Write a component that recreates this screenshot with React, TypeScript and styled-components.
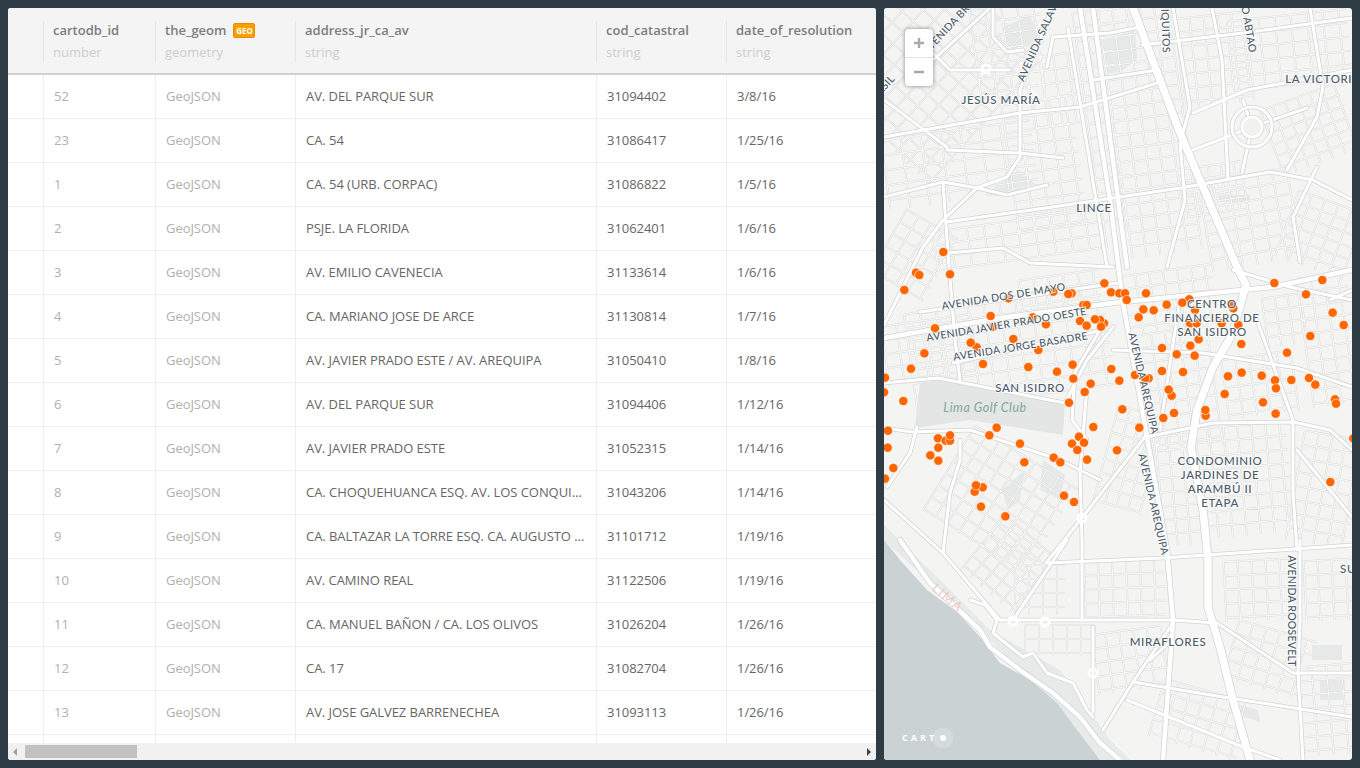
import React from "react";
import styled, { createGlobalStyle } from "styled-components";

const COLUMNS = [
  { name: "", type: "", width: 36 },
  { name: "cartodb_id", type: "number", width: 112 },
  { name: "the_geom", type: "geometry", width: 140, geo: true },
  { name: "address_jr_ca_av", type: "string", width: 301 },
  { name: "cod_catastral", type: "string", width: 130 },
  { name: "date_of_resolution", type: "string", width: 149 },
];

const ROWS = [
  ["52", "AV. DEL PARQUE SUR", "31094402", "3/8/16"],
  ["23", "CA. 54", "31086417", "1/25/16"],
  ["1", "CA. 54 (URB. CORPAC)", "31086822", "1/5/16"],
  ["2", "PSJE. LA FLORIDA", "31062401", "1/6/16"],
  ["3", "AV. EMILIO CAVENECIA", "31133614", "1/6/16"],
  ["4", "CA. MARIANO JOSE DE ARCE", "31130814", "1/7/16"],
  ["5", "AV. JAVIER PRADO ESTE / AV. AREQUIPA", "31050410", "1/8/16"],
  ["6", "AV. DEL PARQUE SUR", "31094406", "1/12/16"],
  ["7", "AV. JAVIER PRADO ESTE", "31052315", "1/14/16"],
  ["8", "CA. CHOQUEHUANCA ESQ. AV. LOS CONQUISTADORES", "31043206", "1/14/16"],
  ["9", "CA. BALTAZAR LA TORRE ESQ. CA. AUGUSTO TAMAYO", "31101712", "1/19/16"],
  ["10", "AV. CAMINO REAL", "31122506", "1/19/16"],
  ["11", "CA. MANUEL BAÑON / CA. LOS OLIVOS", "31026204", "1/26/16"],
  ["12", "CA. 17", "31082704", "1/26/16"],
  ["13", "AV. JOSE GALVEZ BARRENECHEA", "31093113", "1/26/16"],
];

type Pt = number[];

const MOTORWAY: Pt[][] = [
  [[1133, 8], [1180, 133], [1200, 180], [1237, 267], [1246, 285], [1232, 335], [1213, 367], [1197, 410], [1191, 447], [1203, 510], [1208, 560], [1208, 607], [1220, 647], [1233, 700], [1250, 760]],
];

const MAIN: Pt[][] = [
  [[884, 338], [1000, 318], [1113, 303], [1273, 287], [1352, 270]],
  [[1080, 8], [1110, 200], [1123, 303], [1147, 437], [1167, 550], [1173, 620], [1163, 760]],
  [[900, 540], [930, 583], [980, 630], [990, 647], [1020, 670], [1053, 693], [1080, 717], [1100, 743], [1120, 760]],
  [[1093, 8], [1127, 267]],
];

const ROADS: Pt[][] = [
  [[1052, 8], [1020, 90], [1020, 157], [1007, 177], [977, 188], [943, 220], [923, 247], [913, 267], [900, 293], [884, 325]],
  [[884, 137], [1020, 113], [1080, 107], [1157, 83]],
  [[1142, 45], [1243, 33], [1352, 18]],
  [[947, 222], [1080, 203], [1180, 188], [1270, 172], [1313, 180], [1352, 200]],
  [[1193, 113], [1247, 90], [1352, 70]],
  [[1193, 150], [1252, 127], [1307, 108]],
  [[1243, 100], [1252, 127], [1242, 173]],
  [[948, 253], [1003, 248], [1030, 263], [1113, 267]],
  [[884, 197], [943, 182], [977, 188], [1007, 195], [1047, 185]],
  [[947, 150], [1020, 153], [1063, 158]],
  [[943, 183], [948, 253], [955, 340], [960, 380]],
  [[1173, 8], [1190, 107], [1180, 143], [1185, 200], [1167, 267]],
  [[1310, 8], [1323, 87], [1317, 117], [1287, 170]],
  [[1317, 167], [1293, 217], [1300, 262]],
  [[884, 428], [913, 432], [970, 430], [1060, 460], [1100, 480]],
  [[884, 383], [938, 378], [1065, 403], [1087, 360], [1113, 327]],
  [[1113, 350], [1203, 353], [1297, 368], [1352, 387]],
  [[1147, 437], [1213, 423], [1293, 422], [1330, 430], [1352, 450]],
  [[1147, 434], [1082, 518], [1046, 563]],
  [[1087, 387], [1080, 473], [1082, 540], [1082, 620]],
  [[1047, 563], [1163, 558], [1352, 545]],
  [[1000, 620], [1173, 620], [1217, 623]],
  [[1217, 623], [1293, 673], [1352, 673]],
  [[1133, 682], [1223, 697], [1352, 717]],
  [[1127, 700], [1243, 747], [1280, 760]],
  [[1093, 627], [1093, 712]],
  [[1173, 623], [1133, 682], [1103, 730]],
  [[1300, 540], [1300, 620], [1298, 673], [1303, 760]],
  [[884, 500], [943, 553], [1000, 620]],
  [[970, 600], [985, 605], [997, 620], [993, 633], [1023, 657], [1033, 653], [1047, 673], [1073, 683], [1087, 710], [1093, 717]],
  [[917, 427], [910, 453], [887, 487]],
  [[960, 440], [960, 460], [950, 493], [943, 553]],
  [[1067, 540], [1013, 620]],
  [[1257, 320], [1293, 420], [1293, 493], [1297, 550]],
  [[1297, 450], [1352, 517]],
  [[920, 312], [1117, 283]],
  [[953, 363], [1103, 330]],
  [[1233, 270], [1290, 287], [1352, 300]],
  [[1100, 330], [1075, 372], [1072, 420], [1087, 440]],
  [[1068, 28], [1085, 133], [1107, 267]],
  [[1053, 37], [1047, 67]],
  [[1053, 37], [1110, 33], [1140, 27]],
  [[1093, 80], [1157, 70]],
  [[993, 8], [993, 37], [1007, 52], [1023, 50]],
  [[884, 100], [947, 147]],
  [[933, 60], [990, 8]],
  [[1010, 70], [950, 70], [925, 45]],
  [[1330, 300], [1352, 290]],
  [[1180, 300], [1172, 350], [1160, 430]],
  [[1212, 8], [1222, 60], [1228, 180]],
  [[1150, 660], [1172, 640]],
];

// rotated blocks of small streets: cx, cy, w, h, angle, dx, dy
const BLOCKS = [
  [930, 70, 150, 170, 42, 15, 15],
  [1010, 50, 70, 90, -8, 16, 14],
  [960, 165, 150, 70, -8, 20, 15],
  [1045, 165, 70, 130, -8, 16, 14],
  [1055, 90, 50, 70, -8, 14, 14],
  [1105, 120, 35, 220, -8, 12, 14],
  [1150, 130, 70, 250, -8, 14, 14],
  [1215, 60, 70, 90, -6, 14, 14],
  [1290, 50, 120, 70, -6, 16, 14],
  [1310, 130, 80, 70, -20, 13, 12],
  [1215, 190, 60, 50, -8, 13, 12],
  [1250, 220, 90, 90, -10, 15, 13],
  [1320, 235, 70, 70, 20, 14, 12],
  [1020, 240, 170, 40, -8, 17, 13],
  [915, 255, 60, 70, 30, 14, 14],
  [1010, 350, 200, 100, -8, 16, 14],
  [930, 350, 90, 60, -8, 15, 14],
  [1060, 290, 80, 30, -8, 15, 13],
  [1180, 390, 70, 120, -8, 14, 14],
  [1260, 385, 70, 60, -8, 14, 14],
  [1330, 340, 50, 130, -8, 14, 14],
  [1170, 300, 90, 60, -8, 14, 13],
  [1290, 320, 50, 50, -8, 13, 13],
  [1180, 490, 40, 110, -5, 13, 14],
  [1245, 480, 90, 110, -5, 14, 14],
  [1325, 490, 60, 110, 10, 14, 14],
  [1125, 590, 80, 60, -2, 14, 14],
  [1260, 590, 70, 60, -3, 14, 14],
  [1330, 590, 50, 60, -3, 14, 14],
  [1000, 500, 120, 100, 32, 14, 14],
  [1010, 565, 70, 70, 40, 13, 13],
  [1040, 590, 50, 50, 0, 14, 14],
  [1060, 640, 70, 30, 0, 14, 14],
  [1130, 660, 70, 60, -8, 14, 14],
  [1270, 660, 80, 60, 16, 14, 14],
  [1200, 720, 90, 60, 16, 14, 14],
  [1330, 710, 60, 90, -5, 15, 14],
  [1130, 460, 50, 100, 15, 12, 14],
];

const PARKS: Pt[][] = [
  [[1002, 28], [1030, 15], [1040, 40], [1010, 50]],
  [[1103, 40], [1135, 30], [1137, 60], [1120, 72], [1105, 74]],
  [[985, 195], [1018, 170], [1040, 188], [1000, 196]],
  [[1218, 195], [1250, 195], [1250, 202], [1220, 202]],
  [[1043, 460], [1065, 475], [1060, 500], [1040, 490]],
  [[1002, 490], [1025, 470], [1020, 500], [1008, 510]],
  [[1312, 645], [1342, 645], [1342, 660], [1312, 660]],
  [[1240, 705], [1258, 710], [1260, 722], [1242, 716]],
  [[1320, 680], [1345, 680], [1345, 700], [1320, 700]],
];

const PINS = [
  [190, -24], [108, 38], [118, 45], [210, 43], [73, 90], [673, 70], [693, 97], [718, 100], [735, 100], [740, 120],
  [798, 100], [575, 100], [565, 102], [520, 95], [385, 115], [610, 135], [620, 135], [332, 168], [458, 172], [600, 183],
  [498, 193], [672, 190], [660, 180], [645, 178], [620, 197], [663, 200], [165, 205], [340, 200], [290, 262], [272, 248],
  [400, 237], [475, 270], [133, 280], [93, 326], [309, 312], [445, 321], [531, 335], [578, 314], [580, 356], [632, 371],
  [614, 396], [567, 428], [15, 353], [12, 397], [70, 423], [694, 327], [718, 362], [806, 355], [796, 356], [765, 345],
  [846, 333], [909, 336], [846, 264], [890, 283], [931, 257], [944, 287], [956, 238], [1084, 252], [790, 148], [821, 151],
  [860, 134], [776, 172], [928, 118], [907, 128], [945, 150], [1060, 145], [1055, 135], [930, 190], [950, 190], [1025, 190],
  [1075, 195], [1183, 69], [1327, 60], [1278, 103], [1358, 158], [1391, 195], [1291, 228], [1221, 278], [1044, 349], [1085, 338],
  [1145, 347], [1185, 361], [1188, 385], [1234, 360], [1287, 354], [1306, 374], [1034, 402], [1149, 427], [1187, 461], [1365, 418],
  [1368, 431], [875, 407], [866, 389], [977, 467], [976, 450], [882, 459], [850, 474], [727, 448], [640, 501], [778, 503],
  [597, 530], [576, 551], [612, 548], [592, 570], [621, 599], [711, 571], [24, 512], [23, 563], [40, 624], [15, 656],
  [174, 535], [197, 542], [210, 542], [210, 526], [175, 563], [151, 586], [175, 602], [350, 503], [328, 526], [420, 551],
  [433, 607], [521, 593], [541, 607], [308, 682], [284, 695], [288, 676], [303, 740], [376, 769], [552, 707], [582, 726],
  [1351, 666], [1420, 535],
].map(([x, y]) => [880 + x / 3, 260 + y / 3]);

const LABELS = [
  { text: "AVENIDA BRASIL", x: 866, y: 111, angle: -47 },
  { text: "AVENIDA BRASIL", x: 956, y: 24, angle: -47 },
  { text: "AVENIDA SALAVERRY", x: 1046, y: 32, angle: -66 },
  { text: "IQUITOS", x: 1162, y: 31, angle: 88 },
  { text: "AV. ANTONIO ABTAO", x: 1240, y: 0, angle: 80 },
  { text: "JESÚS MARÍA", x: 1001, y: 104, size: 11.5 },
  { text: "LA VICTORIA", x: 1323, y: 83, size: 11.5 },
  { text: "LINCE", x: 1094, y: 212, size: 11.5 },
  { text: "AVENIDA DOS DE MAYO", x: 1004, y: 300, angle: -9 },
  { text: "AVENIDA JAVIER PRADO OESTE", x: 1007, y: 328, angle: -9.5 },
  { text: "AVENIDA JORGE BASADRE", x: 1021, y: 350, angle: -9 },
  { text: "CENTRO", x: 1212, y: 308, size: 11.5 },
  { text: "FINANCIERO DE", x: 1212, y: 322, size: 11.5 },
  { text: "SAN ISIDRO", x: 1212, y: 336, size: 11.5 },
  { text: "SAN ISIDRO", x: 1030, y: 392, size: 11.5 },
  { text: "AVENIDA AREQUIPA", x: 1140, y: 384, angle: 77 },
  { text: "AVENIDA AREQUIPA", x: 1150, y: 505, angle: 77 },
  { text: "CONDOMINIO", x: 1220, y: 465, size: 11.5 },
  { text: "JARDINES DE", x: 1220, y: 479, size: 11.5 },
  { text: "ARAMBÚ II", x: 1220, y: 493, size: 11.5 },
  { text: "ETAPA", x: 1220, y: 507, size: 11.5 },
  { text: "AVENIDA ROOSEVELT", x: 1288, y: 611, angle: 90 },
  { text: "SUR", x: 1352, y: 573, size: 11.5 },
  { text: "MIRAFLORES", x: 1168, y: 646, size: 11.5 },
];

const toPath = (line: Pt[]) => "M" + line.map((p) => p.join(" ")).join("L");

const blockPath = ([cx, cy, w, h, angle, dx, dy]: number[]) => {
  const a = (angle * Math.PI) / 180;
  const put = (x: number, y: number) =>
    `${(cx + x * Math.cos(a) - y * Math.sin(a)).toFixed(1)} ${(cy + x * Math.sin(a) + y * Math.cos(a)).toFixed(1)}`;
  let d = "";
  for (let x = -w / 2; x <= w / 2; x += dx) d += `M${put(x, -h / 2)}L${put(x, h / 2)}`;
  for (let y = -h / 2; y <= h / 2; y += dy) d += `M${put(-w / 2, y)}L${put(w / 2, y)}`;
  return d;
};

const CityMap = () => (
  <MapSvg viewBox="884 8 468 752">
    <rect x="884" y="8" width="468" height="752" fill="#f4f4f3" />
    {PARKS.map((p, i) => (
      <polygon key={i} points={p.join(" ")} fill="#e6e9e7" />
    ))}
    {BLOCKS.map((b, i) => (
      <SmallCasing key={i} d={blockPath(b)} />
    ))}
    {BLOCKS.map((b, i) => (
      <SmallStreet key={i} d={blockPath(b)} />
    ))}
    <polygon
      points="920,383 938,380 1065,403 1063,435 970,420 915,428"
      fill="#e3e6e5"
    />
    <polygon points="884,525 930,570 990,630 1060,670 1110,740 1130,760 1100,760 1040,690 960,610 900,555 884,540" fill="#e7eae8" />
    <polygon
      points="884,540 900,560 927,590 957,612 980,637 1000,663 1030,680 1057,703 1077,730 1100,760 884,760"
      fill="#cad2d3"
    />
    {ROADS.map((r, i) => <Casing key={i} d={toPath(r)} $w={4.5} />)}
    {MAIN.map((r, i) => <Casing key={i} d={toPath(r)} $w={6} />)}
    {MOTORWAY.map((r, i) => <Casing key={i} d={toPath(r)} $w={9} />)}
    {ROADS.map((r, i) => <Road key={i} d={toPath(r)} $w={3} />)}
    {MAIN.map((r, i) => <Road key={i} d={toPath(r)} $w={4.5} />)}
    {MOTORWAY.map((r, i) => <Road key={i} d={toPath(r)} $w={7.5} />)}
    <RingCasing cx="1252" cy="127" r="20" />
    <RingCasing cx="1252" cy="127" r="10" />
    <Ring cx="1252" cy="127" r="20" />
    <Ring cx="1252" cy="127" r="10" />
    <circle cx="1252" cy="127" r="8.5" fill="#f1f1f0" />
    <Ring cx="986" cy="69" r="4" />
    <Ring cx="1013" cy="621" r="4" />
    <Ring cx="1045" cy="622" r="4" />
    <Ring cx="1093" cy="673" r="4" />
    <Ring cx="1082" cy="518" r="4" />

    {PINS.map(([x, y], i) => (
      <Pin key={i} cx={x} cy={y} r="4.6" />
    ))}

    {LABELS.map((l) => (
      <Label
        key={l.text + l.y}
        x={l.x}
        y={l.y}
        $size={l.size || 10.5}
        transform={l.angle ? `rotate(${l.angle} ${l.x} ${l.y})` : undefined}
      >
        {l.text}
      </Label>
    ))}
    <GolfLabel x="985" y="412">Lima Golf Club</GolfLabel>
    <CoastLabel x="945" y="601" transform="rotate(40 945 601)">LIMA</CoastLabel>
  </MapSvg>
);

const App = () => (
  <>
    <GlobalStyle />
    <Page>
      <TablePanel>
        <TableView>
          <DataTable>
            <colgroup>
              {COLUMNS.map((c, i) => (
                <col key={i} width={c.width} />
              ))}
            </colgroup>
            <thead>
              <tr>
                {COLUMNS.map((c, i) => (
                  <HeadCell key={i}>
                    {c.name && (
                      <HeadInner>
                        <ColumnName>
                          {c.name}
                          {c.geo && <GeoBadge>GEO</GeoBadge>}
                        </ColumnName>
                        <ColumnType>{c.type}</ColumnType>
                      </HeadInner>
                    )}
                  </HeadCell>
                ))}
              </tr>
            </thead>
            <tbody>
              {ROWS.map((row) => (
                <tr key={row[0]}>
                  <Cell />
                  <Cell $tone="muted">{row[0]}</Cell>
                  <Cell $tone="muted">GeoJSON</Cell>
                  <Cell>{row[1]}</Cell>
                  <Cell>{row[2]}</Cell>
                  <Cell>{row[3]}</Cell>
                </tr>
              ))}
              <tr>
                {COLUMNS.map((c, i) => (
                  <Cell key={i} />
                ))}
              </tr>
            </tbody>
          </DataTable>
        </TableView>
        <ScrollBar>
          <ArrowLeft />
          <Thumb />
          <ArrowRight />
        </ScrollBar>
      </TablePanel>
      <MapPanel>
        <CityMap />
        <ZoomControl>
          <ZoomButton aria-label="Zoom in">
            <svg width="12" height="12" viewBox="0 0 12 12">
              <path d="M1 6h10M6 1v10" stroke="#a9a9a9" strokeWidth="2.4" />
            </svg>
          </ZoomButton>
          <ZoomButton aria-label="Zoom out">
            <svg width="12" height="12" viewBox="0 0 12 12">
              <path d="M1 6h10" stroke="#a9a9a9" strokeWidth="2.4" />
            </svg>
          </ZoomButton>
        </ZoomControl>
        <CartoLogo>
          CART
          <CartoDot />
        </CartoLogo>
      </MapPanel>
    </Page>
  </>
);

const GlobalStyle = createGlobalStyle`
  html, body {
    margin: 0;
    height: 100%;
    background: #2f3c45;
    font-family: "Open Sans", "Liberation Sans", sans-serif;
    overflow: hidden;
  }
`;

const Page = styled.div`
  display: flex;
  gap: 8px;
  box-sizing: border-box;
  height: 768px;
  padding: 8px;
`;

const TablePanel = styled.section`
  display: flex;
  flex-direction: column;
  width: 868px;
  background: #fff;
  border-radius: 3px;
  overflow: hidden;
`;

const TableView = styled.div`
  flex: 1;
  min-height: 0;
  overflow: hidden;
`;

const DataTable = styled.table`
  width: 868px;
  table-layout: fixed;
  border-collapse: separate;
  border-spacing: 0;
`;

const HeadCell = styled.th`
  height: 67px;
  padding: 13px 0 10px;
  box-sizing: border-box;
  background: #f4f4f4;
  border-bottom: 2px solid #d0d0d0;
  text-align: left;
  font-weight: 400;
  vertical-align: top;
`;

const HeadInner = styled.div`
  height: 42px;
  padding-left: 9px;
  border-left: 1px solid #e6e6e6;
  margin-left: -1px;
`;

const ColumnName = styled.div`
  display: flex;
  align-items: center;
  height: 18px;
  font-size: 13px;
  font-weight: 600;
  color: #7d7d7d;
`;

const ColumnType = styled.div`
  margin-top: 4px;
  font-size: 13px;
  line-height: 18px;
  color: #cdcdcd;
`;

const GeoBadge = styled.span`
  box-sizing: border-box;
  width: 22px;
  height: 15px;
  margin-left: 7px;
  background: #fa9f00;
  border: 1px solid #e88a00;
  border-radius: 2px;
  color: #fff;
  font-size: 8px;
  font-weight: 700;
  line-height: 13px;
  text-align: center;
`;

const Cell = styled.td<{ $tone?: "muted" }>`
  height: 44px;
  padding: 0 10px 2px;
  box-sizing: border-box;
  border-bottom: 1px solid #eee;
  border-right: 1px solid #eee;
  font-size: 13px;
  letter-spacing: -0.05px;
  color: ${(p) => (p.$tone === "muted" ? "#b0b0b0" : "#666")};
  white-space: nowrap;
  overflow: hidden;
  text-overflow: ellipsis;
  &:last-child {
    border-right: 0;
  }
`;

const ScrollBar = styled.div`
  display: flex;
  align-items: center;
  flex: none;
  height: 17px;
  background: #f1f1f1;
`;

const ArrowLeft = styled.span`
  margin-left: 5px;
  border: 4px solid transparent;
  border-left: 0;
  border-right: 4px solid #a3a3a3;
`;

const Thumb = styled.span`
  width: 112px;
  height: 13px;
  margin-left: 8px;
  background: #c1c1c1;
`;

const ArrowRight = styled.span`
  margin-left: auto;
  margin-right: 5px;
  border: 4px solid transparent;
  border-right: 0;
  border-left: 4px solid #404040;
`;

const MapPanel = styled.section`
  position: relative;
  width: 468px;
  height: 752px;
  border-radius: 3px;
  overflow: hidden;
`;

const MapSvg = styled.svg`
  display: block;
  width: 468px;
  height: 752px;
`;

const SmallCasing = styled.path`
  fill: none;
  stroke: #dcdddc;
  stroke-width: 2;
`;

const SmallStreet = styled.path`
  fill: none;
  stroke: #fbfbfb;
  stroke-width: 0.9;
`;

const Casing = styled.path<{ $w: number }>`
  fill: none;
  stroke: #d2d4d4;
  stroke-width: ${(p) => p.$w};
  stroke-linejoin: round;
  stroke-linecap: round;
`;

const Road = styled.path<{ $w: number }>`
  fill: none;
  stroke: #fff;
  stroke-width: ${(p) => p.$w};
  stroke-linejoin: round;
  stroke-linecap: round;
`;

const Ring = styled.circle`
  fill: none;
  stroke: #fff;
  stroke-width: 3;
`;

const RingCasing = styled.circle`
  fill: none;
  stroke: #d2d4d4;
  stroke-width: 4.5;
`;

const Pin = styled.circle`
  fill: #ff6600;
  stroke: #fff;
  stroke-width: 0.6;
`;

const Label = styled.text<{ $size: number }>`
  font-family: Lato, "Open Sans", sans-serif;
  font-size: ${(p) => p.$size}px;
  font-weight: 500;
  letter-spacing: ${(p) => (p.$size > 11 ? 0.6 : 0.25)}px;
  fill: #4b5b68;
  stroke: #fff;
  stroke-width: 2px;
  stroke-opacity: 0.75;
  paint-order: stroke;
  text-anchor: middle;
`;

const GolfLabel = styled.text`
  font-family: Lato, "Open Sans", sans-serif;
  font-size: 12.5px;
  font-style: italic;
  letter-spacing: 0.5px;
  fill: #82a896;
  text-anchor: middle;
`;

const CoastLabel = styled.text`
  font-family: Lato, "Open Sans", sans-serif;
  font-size: 12.5px;
  letter-spacing: 1.5px;
  fill: #efc6c9;
  text-anchor: middle;
`;

const ZoomControl = styled.div`
  position: absolute;
  top: 21px;
  left: 21px;
  width: 28px;
  height: 57px;
  background: #fff;
  border-radius: 4px;
  box-shadow: 0 0 4px rgba(0, 0, 0, 0.45);
`;

const ZoomButton = styled.div`
  display: flex;
  align-items: center;
  justify-content: center;
  height: 28px;
  & + & {
    border-top: 1px solid #e2e2e2;
  }
`;

const CartoLogo = styled.div`
  position: absolute;
  left: 18px;
  bottom: 16px;
  display: flex;
  align-items: center;
  font-family: "Open Sans", sans-serif;
  font-size: 9px;
  font-weight: 700;
  letter-spacing: 3px;
  color: #fff;
`;

const CartoDot = styled.span`
  width: 6px;
  height: 6px;
  margin-left: 3px;
  background: #fff;
  border-radius: 50%;
  box-shadow: 0 0 0 7px rgba(255, 255, 255, 0.2);
`;

export default App;
